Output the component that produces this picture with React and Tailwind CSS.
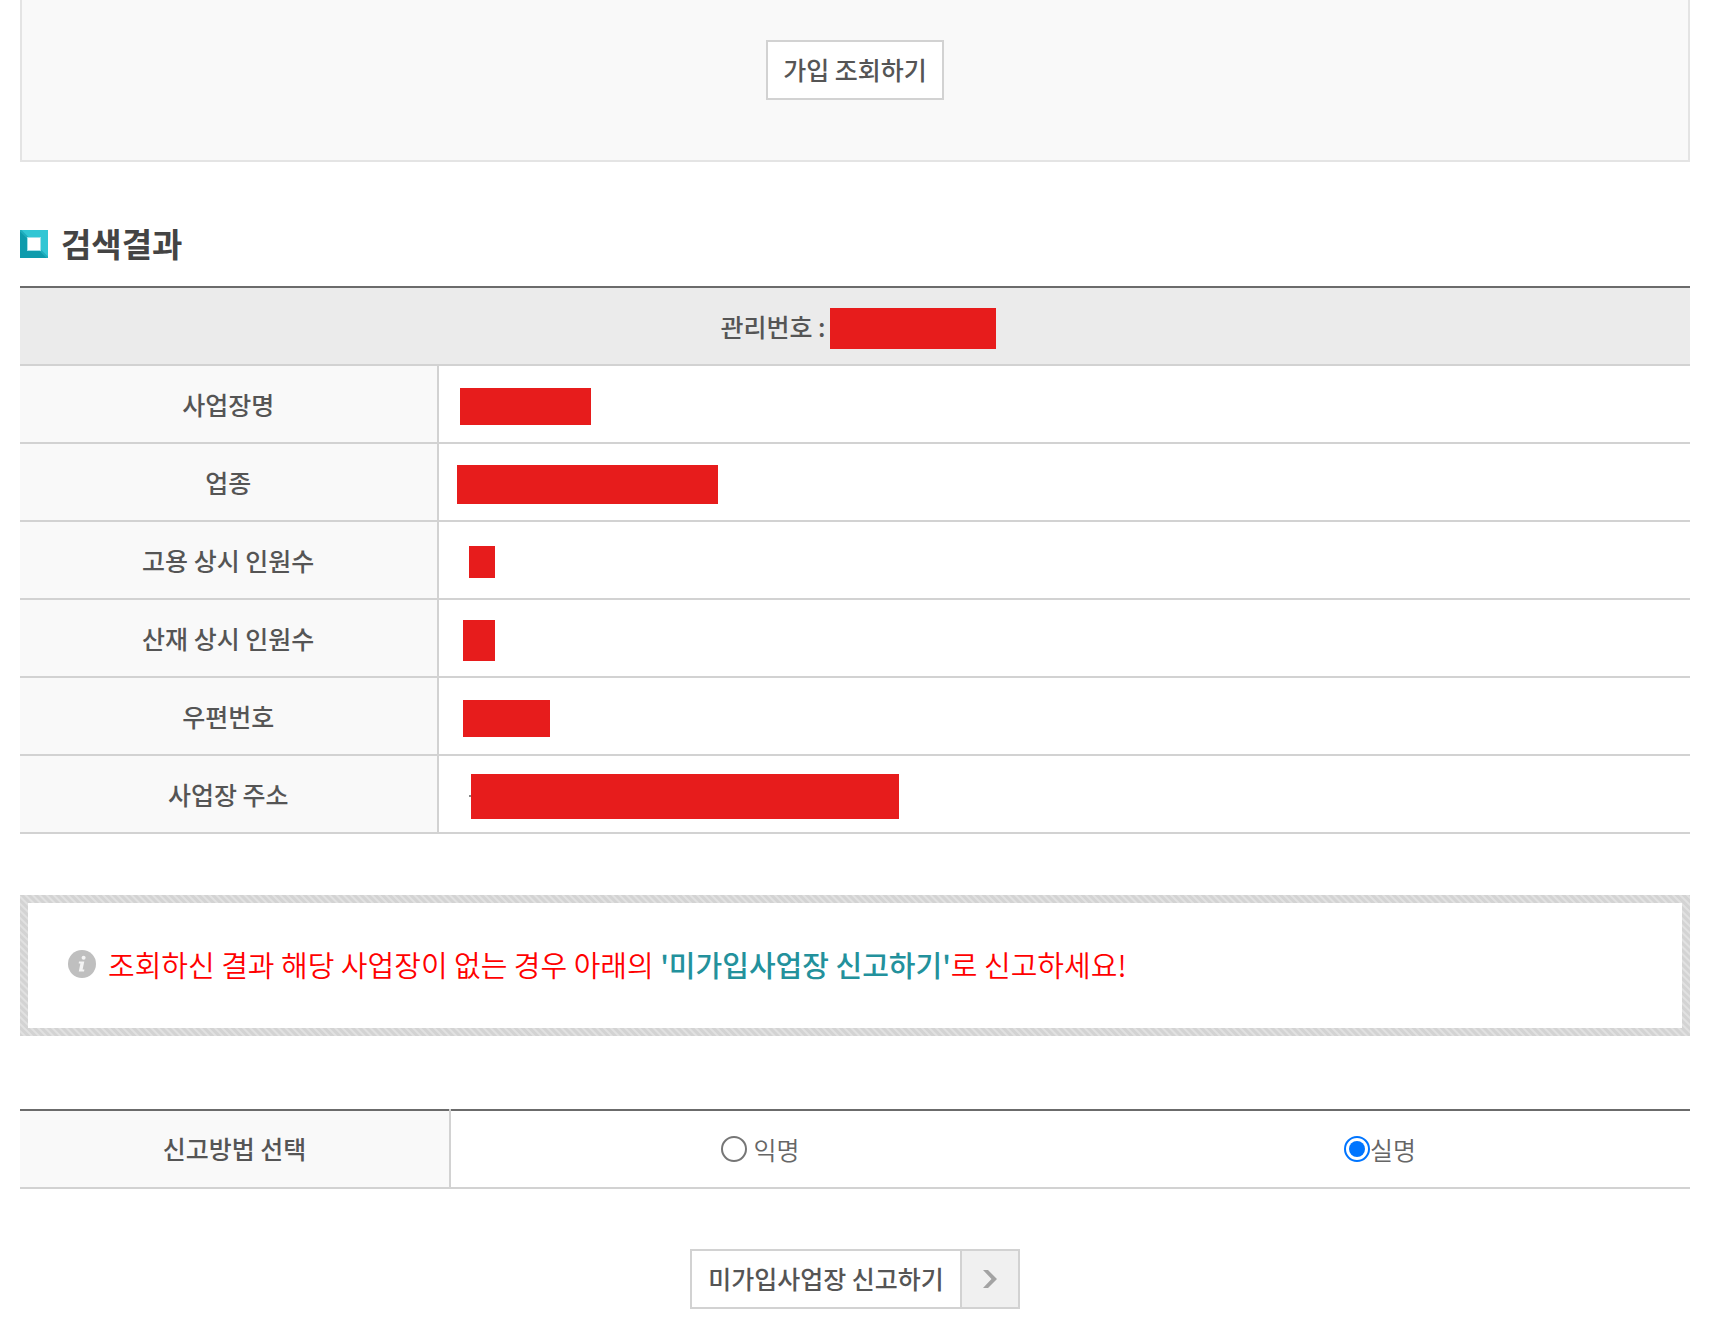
const results = [
  { label: "사업장명", box: "ml-[3px] h-[37px] w-[131px]" },
  { label: "업종", box: "h-[39px] w-[261px]" },
  { label: "고용 상시 인원수", box: "ml-3 h-8 w-[26px]" },
  { label: "산재 상시 인원수", box: "ml-1.5 h-[41px] w-8" },
  { label: "우편번호", box: "ml-1.5 h-[37px] w-[87px]" },
  { label: "사업장 주소", box: "h-[45px] w-[428px]", dash: true },
];

function Redacted({ className }) {
  return <span className={`block shrink-0 bg-[#e71c1c] ${className}`} />;
}

function TitleIcon() {
  return (
    <svg width="28" height="28" viewBox="0 0 28 28" aria-hidden="true">
      <path d="M0 0H28V28Z" fill="#31c6d4" />
      <path d="M0 0V28H28Z" fill="#0e9bac" />
      <path d="M0 0L28 28" stroke="#1fadbd" strokeWidth="2" />
      <rect x="7" y="7" width="14" height="14" fill="#9fdfe8" />
      <rect x="8" y="8" width="12" height="12" fill="#fff" />
    </svg>
  );
}

function InfoIcon() {
  return (
    <svg width="28" height="28" viewBox="0 0 28 28" className="shrink-0" aria-hidden="true">
      <circle cx="14" cy="14" r="14" fill="#bfbfbf" />
      <circle cx="15.6" cy="7.8" r="2" fill="#f4f4f4" />
      <path d="M11 11.5H16.3L14.6 19.6H16.4L16 21.5H10.8L12.4 13.4H10.7Z" fill="#f4f4f4" />
    </svg>
  );
}

function Radio({ id, label, defaultChecked, gap }) {
  return (
    <div className={`flex items-center justify-center ${gap}`}>
      <input
        type="radio"
        id={id}
        name="method"
        defaultChecked={defaultChecked}
        className="grid size-[26px] appearance-none place-content-center rounded-full border-2 border-[#767676] bg-white before:size-4 before:rounded-full checked:border-[#0075ff] checked:before:bg-[#0075ff]"
      />
      <label htmlFor={id} className="text-[25px] leading-9 font-[350] text-[#666]">
        {label}
      </label>
    </div>
  );
}

export default function App() {
  return (
    <main className="bg-white pr-[34px] pb-[30px] pl-5 font-['Noto_Sans_CJK_KR','Noto_Sans',sans-serif] text-[25px] leading-9 text-[#555]">
      <section className="flex justify-center border-2 border-t-0 border-[#e4e4e4] bg-[#f9f9f9] pt-10 pb-[60px]">
        <button type="button" className="h-[60px] border-2 border-[#d2d2d2] bg-white px-[15px] pb-0.5 font-medium">
          가입 조회하기
        </button>
      </section>

      <h2 className="mt-[57px] flex items-center gap-[13px] text-[33px] leading-12 font-bold text-[#444]">
        <TitleIcon />
        <span className="pb-0.5">검색결과</span>
      </h2>

      <table className="mt-[17px] w-full table-fixed border-collapse border-t-2 border-b-2 border-t-[#6b6b6b] border-b-[#d2d2d2]">
        <colgroup>
          <col className="w-1/4" />
          <col />
        </colgroup>
        <thead>
          <tr className="h-[78px] border-b-2 border-[#d2d2d2] bg-[#ebebeb]">
            <th colSpan={2} className="p-0 pt-1 font-medium">
              <div className="flex items-start justify-center gap-1 pl-1.5">
                관리번호 : <Redacted className="h-[41px] w-[166px]" />
              </div>
            </th>
          </tr>
        </thead>
        <tbody>
          {results.map((row) => (
            <tr key={row.label} className="h-[78px] border-b-2 border-[#d2d2d2]">
              <th scope="row" className="border-r-2 border-[#d2d2d2] bg-[#f9f9f9] p-0 font-medium">
                {row.label}
              </th>
              <td className="p-0 pt-1 pl-[18px]">
                <div className="flex items-center">
                  {row.dash && <span className="ml-3 h-0.5 w-0.5 bg-[#888]" />}
                  <Redacted className={row.box} />
                </div>
              </td>
            </tr>
          ))}
        </tbody>
      </table>

      <div className="mt-[61px] bg-[repeating-linear-gradient(45deg,#d3d3d3_0px,#d3d3d3_2px,#e1e1e1_3px,#e1e1e1_4px,#d3d3d3_5px)] p-2">
        <p className="flex items-center gap-3 bg-white px-10 pt-[41px] pb-11 text-[29px] leading-10 font-[350] text-[#ff0000]">
          <InfoIcon />
          <span>
            조회하신 결과 해당 사업장이 없는 경우 아래의{" "}
            <strong className="font-medium text-[#23919c]">'미가입사업장 신고하기'</strong>로 신고하세요!
          </span>
        </p>
      </div>

      <table className="mt-[73px] w-full table-fixed border-collapse border-t-2 border-b-2 border-t-[#6b6b6b] border-b-[#d2d2d2]">
        <colgroup>
          <col className="w-[430px]" />
          <col />
          <col />
        </colgroup>
        <tbody>
          <tr className="h-[78px]">
            <th scope="row" className="border-r-2 border-r-[#d2d2d2] bg-[#f9f9f9] p-0 pb-0.5 font-medium">
              신고방법 선택
            </th>
            <td className="p-0">
              <Radio id="anonymous" label="익명" gap="gap-1.5" />
            </td>
            <td className="p-0">
              <Radio id="real-name" label="실명" gap="gap-0" defaultChecked />
            </td>
          </tr>
        </tbody>
      </table>

      <div className="mt-[60px] flex justify-center">
        <button type="button" className="flex h-[60px] border-2 border-[#d2d2d2] bg-white font-medium">
          <span className="flex h-full items-center px-4 pb-0.5">미가입사업장 신고하기</span>
          <span className="flex h-full w-[58px] items-center justify-center border-l-2 border-[#d2d2d2] bg-[#f0f0f0]">
            <svg width="14" height="18" viewBox="0 0 14 18" aria-hidden="true">
              <path d="M0 0H5L14 9L5 18H0L8.5 9Z" fill="#a3a3a3" />
            </svg>
          </span>
        </button>
      </div>
    </main>
  );
}
